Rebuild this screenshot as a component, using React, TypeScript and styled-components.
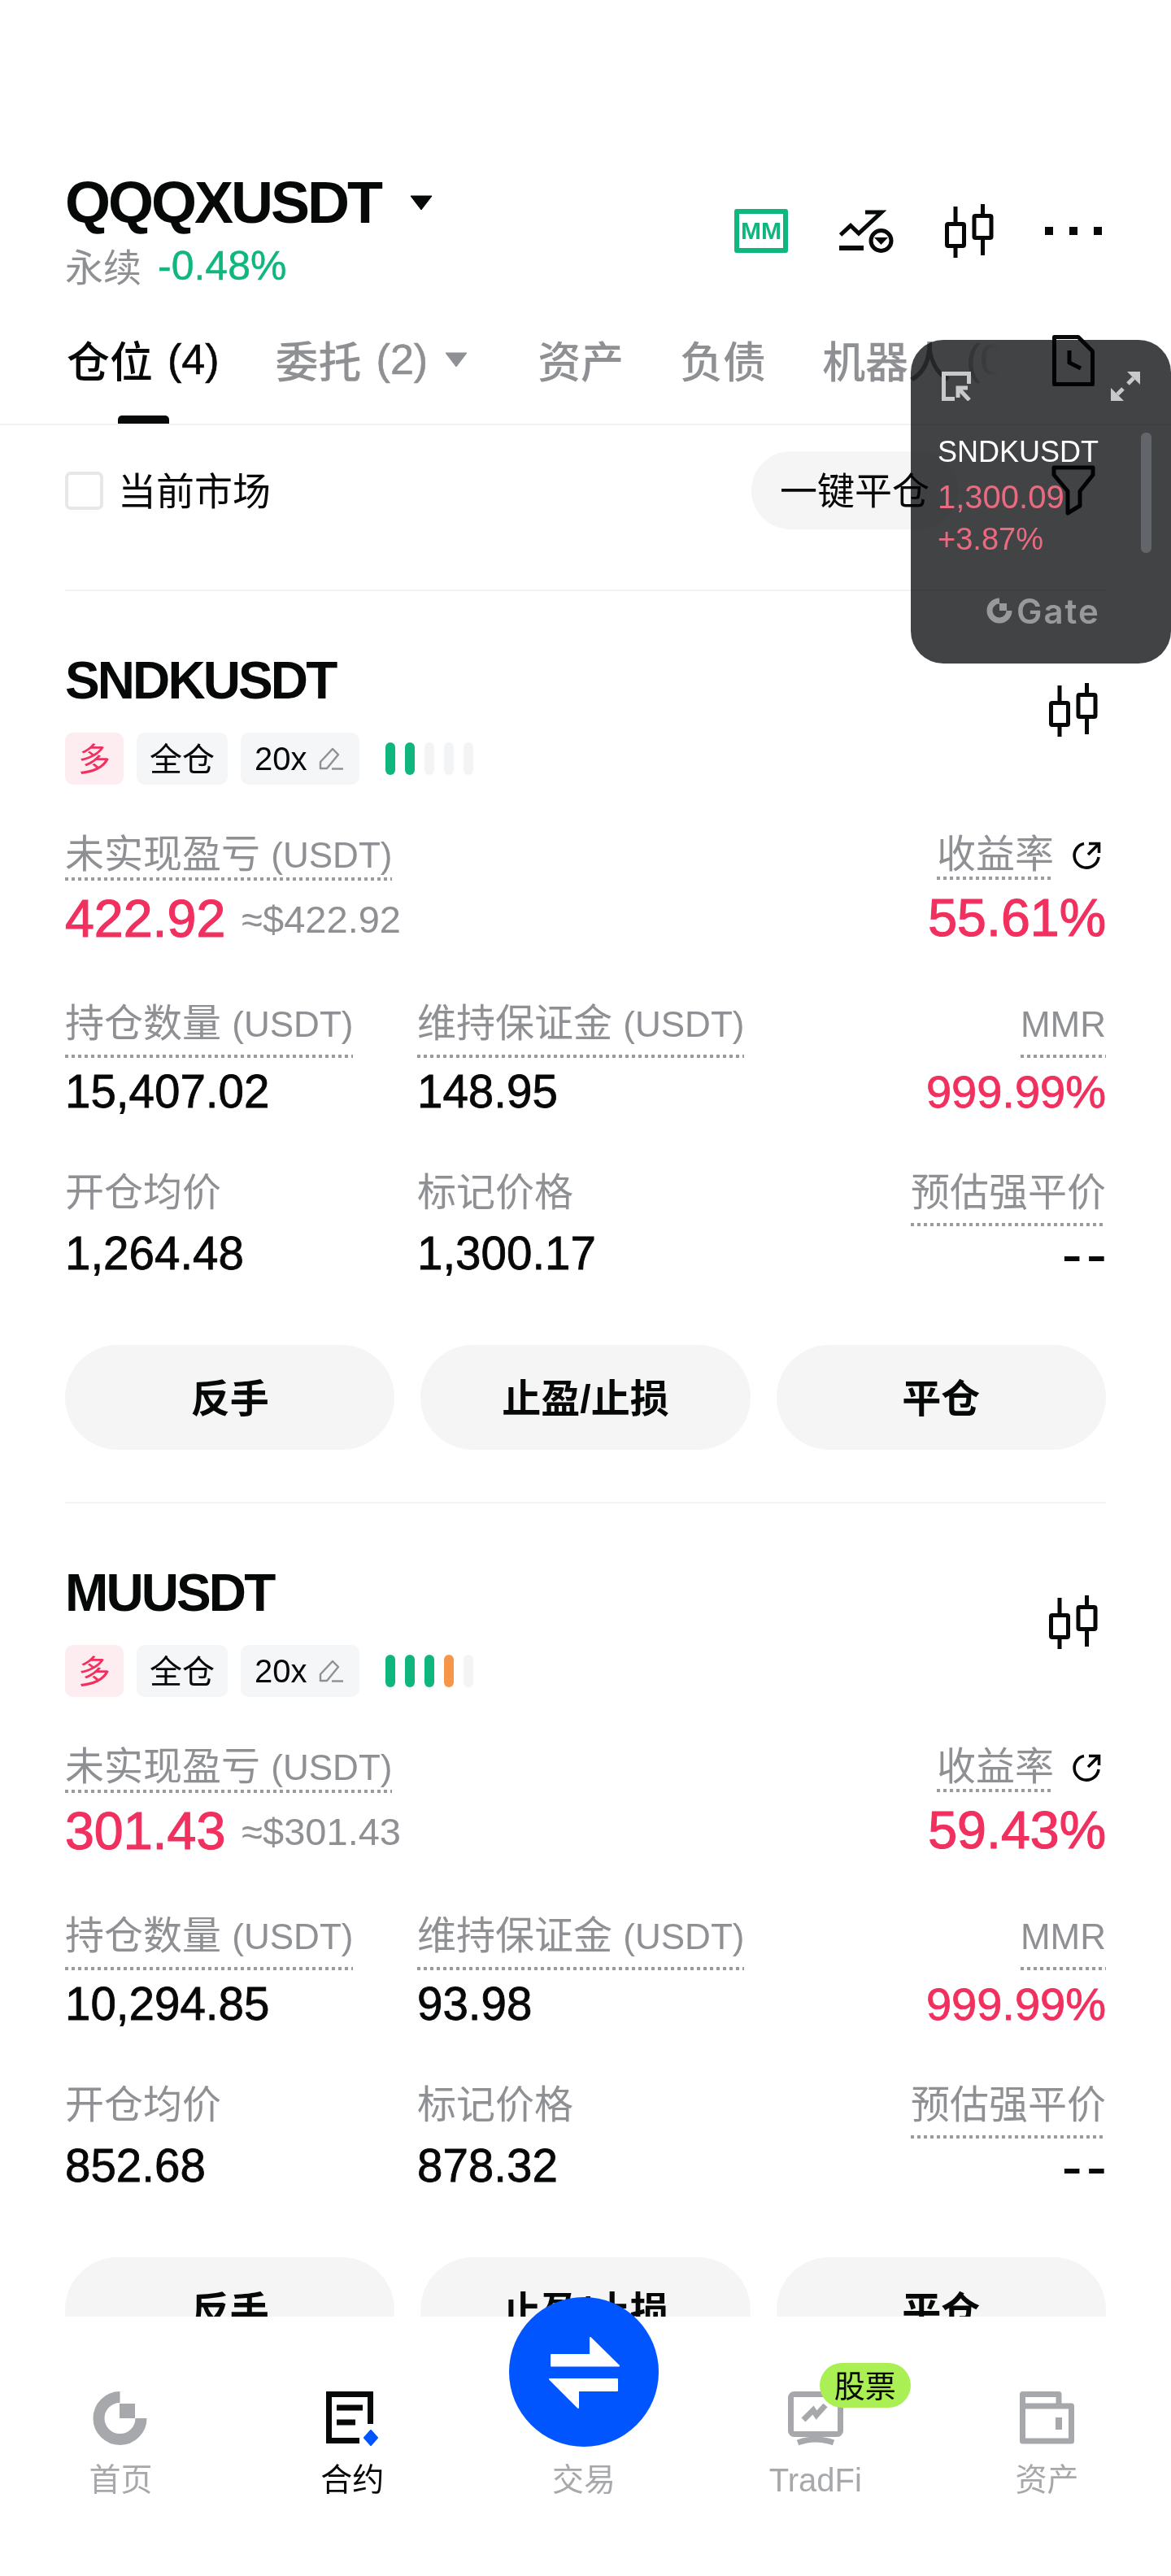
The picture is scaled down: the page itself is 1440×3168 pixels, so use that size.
import React from 'react';
import styled, { createGlobalStyle } from 'styled-components';

const black = '#070808';
const grey = '#8e9093';
const red = '#f0305f';
const green = '#0fb77e';
const navGrey = '#a6a8ab';
const blue = '#0055ff';

const GlobalStyle = createGlobalStyle`
  html, body {
    margin: 0;
    padding: 0;
    background: #fff;
  }
  body {
    font-family: 'Liberation Sans', 'Noto Sans CJK SC', sans-serif;
    color: ${black};
  }
`;

type Position = {
  symbol: string;
  lev: number[];
  pnl: string;
  roi: string;
  size: string;
  margin: string;
  entry: string;
  mark: string;
};

const positions: Position[] = [
  {
    symbol: 'SNDKUSDT',
    lev: [1, 1, 0, 0, 0],
    pnl: '422.92',
    roi: '55.61%',
    size: '15,407.02',
    margin: '148.95',
    entry: '1,264.48',
    mark: '1,300.17',
  },
  {
    symbol: 'MUUSDT',
    lev: [1, 1, 1, 2, 0],
    pnl: '301.43',
    roi: '59.43%',
    size: '10,294.85',
    margin: '93.98',
    entry: '852.68',
    mark: '878.32',
  },
];

const CandleIcon = () => (
  <svg width="60" height="66" viewBox="0 0 60 66" fill="none" stroke={black} strokeWidth="5">
    <rect x="2.5" y="24.5" width="21" height="27" rx="1.5" />
    <rect x="36" y="14.5" width="21" height="27" rx="1.5" />
    <path d="M13 3V24M13 52V66M46.5 0V14M46.5 42V63" />
  </svg>
);

const Caret = ({ color, w, h }: { color: string; w: number; h: number }) => (
  <svg width={w} height={h} viewBox="0 0 28 19">
    <path d="M1 1H27L14 18Z" fill={color} stroke={color} strokeLinejoin="round" />
  </svg>
);

const RefreshIcon = () => (
  <svg width="36" height="36" viewBox="0 0 36 36" fill="none" stroke={black} strokeWidth="3.6">
    <path d="M15 3.5A15 15 0 1 0 33 20" />
    <path d="M20 17L33 4M21 3.5H33.5V15" />
  </svg>
);

const EditIcon = () => (
  <svg width="30" height="30" viewBox="0 0 30 30" fill="none" stroke={grey} strokeWidth="2.4">
    <path d="M2 27V19L17 3L24 10L10 27Z" strokeLinejoin="round" />
    <path d="M16 27.5H30" />
  </svg>
);

const Page = styled.div`
  position: relative;
  width: 1440px;
  height: 3168px;
  overflow: hidden;
  background: #fff;
`;

const Header = styled.header`
  display: flex;
  justify-content: space-between;
  align-items: center;
  padding: 209px 80px 0;
`;

const TitleBlock = styled.div`
  display: flex;
  flex-direction: column;
  gap: 10px;
`;

const TitleRow = styled.div`
  display: flex;
  align-items: center;
  gap: 36px;
  height: 80px;
`;

const Title = styled.h1`
  margin: 0;
  font-size: 72px;
  line-height: 80px;
  font-weight: 700;
  letter-spacing: -3px;
`;

const SubRow = styled.div`
  display: flex;
  align-items: center;
  gap: 20px;
  height: 56px;
`;

const SubLabel = styled.span`
  font-size: 47px;
  color: ${grey};
  padding-bottom: 4px;
`;

const SubChange = styled.span`
  font-size: 50px;
  color: ${green};
  -webkit-text-stroke: 0.5px ${green};
`;

const HeaderActions = styled.div`
  display: flex;
  align-items: center;
  gap: 63px;
  margin-top: 4px;
`;

const MmBadge = styled.div`
  box-sizing: border-box;
  width: 66px;
  height: 54px;
  border: 6px solid ${green};
  border-radius: 3px;
  display: flex;
  align-items: center;
  justify-content: center;
  color: ${green};
  font-size: 30px;
  font-weight: 700;
  line-height: 1;
`;

const TabBar = styled.nav`
  display: flex;
  margin-top: 38px;
  padding: 0 94px 0 82px;
  border-bottom: 2px solid #f2f3f4;
`;

const TabList = styled.div`
  flex: 1;
  display: flex;
  gap: 69px;
  overflow: hidden;
  white-space: nowrap;
  margin-right: 49px;
  mask-image: linear-gradient(to right, #000 calc(100% - 85px), transparent calc(100% - 15px));
`;

const Tab = styled.div<{ $active?: boolean }>`
  position: relative;
  flex: none;
  display: flex;
  align-items: center;
  height: 98px;
  padding-bottom: 30px;
  font-size: 53px;
  font-weight: 500;
  color: ${(p) => (p.$active ? black : grey)};
`;

const TabCount = styled.span`
  margin-left: 18px;
  font-size: 52px;
  -webkit-text-stroke: 0.6px currentColor;
`;

const TabCaret = styled.span`
  display: flex;
  margin: 0 17px 0 21px;
`;

const TabMarker = styled.span`
  position: absolute;
  left: 63px;
  bottom: -1px;
  width: 63px;
  height: 11px;
  border-radius: 5px 5px 0 0;
  background: ${black};
`;

const DocSlot = styled.div`
  flex: none;
  display: flex;
  align-items: center;
  height: 100px;
`;

const Toolbar = styled.div`
  display: flex;
  align-items: center;
  justify-content: space-between;
  padding: 32px 93px 74px 80px;
`;

const Check = styled.label`
  display: flex;
  align-items: center;
  gap: 18px;
  font-size: 47px;
`;

const CheckBox = styled.span`
  box-sizing: border-box;
  width: 47px;
  height: 47px;
  border: 4px solid #e6e7e9;
  border-radius: 7px;
`;

const CheckText = styled.span`
  padding-bottom: 6px;
`;

const ToolbarRight = styled.div`
  display: flex;
  align-items: center;
  gap: 115px;
`;

const PillButton = styled.button`
  height: 96px;
  padding: 0 35px 6px;
  border: 0;
  border-radius: 48px;
  background: #f5f5f5;
  font-family: inherit;
  font-size: 46px;
  color: ${black};
`;

const Card = styled.section`
  margin: 0 80px;
  padding: 77px 0 64px;
  border-top: 2px solid #f2f3f4;
`;

const CardHead = styled.div`
  display: flex;
  justify-content: space-between;
  align-items: center;
`;

const CardHeadRight = styled.div`
  display: flex;
  margin: 0 10px 24px 0;
`;

const Symbol = styled.h2`
  margin: 0 0 31px;
  font-size: 64px;
  line-height: 66px;
  font-weight: 700;
  letter-spacing: -2.9px;
`;

const TagRow = styled.div`
  display: flex;
  align-items: center;
  gap: 16px;
`;

const Tag = styled.span<{ $long?: boolean }>`
  box-sizing: border-box;
  display: flex;
  align-items: center;
  gap: 14px;
  height: 64px;
  padding: 0 16px 5px;
  border-radius: 10px;
  font-size: 40px;
  background: ${(p) => (p.$long ? '#fdecf0' : '#f5f6f7')};
  color: ${(p) => (p.$long ? red : black)};
`;

const Leverage = styled.span`
  display: flex;
  align-items: center;
  gap: 14px;
  margin: 5px 4px 0 1px;
`;

const LevBars = styled.div`
  display: flex;
  gap: 12px;
  margin-left: 16px;
`;

const LevBar = styled.span<{ $level: number }>`
  width: 12px;
  height: 40px;
  border-radius: 6px;
  background: ${(p) => (p.$level === 2 ? '#f7954a' : p.$level === 1 ? green : '#f2f4f6')};
`;

const PnlRow = styled.div`
  display: flex;
  justify-content: space-between;
  margin-top: 58px;
`;

const Stack = styled.div<{ $end?: boolean }>`
  display: flex;
  flex-direction: column;
  align-items: ${(p) => (p.$end ? 'flex-end' : 'flex-start')};
`;

const LabelLine = styled.div`
  display: flex;
  align-items: flex-start;
  gap: 22px;
`;

const RefreshSlot = styled.span`
  display: flex;
  margin: 11px 6px 0 0;
`;

const Label = styled.span<{ $dotted?: boolean; $pad: number }>`
  display: inline-block;
  white-space: nowrap;
  font-size: 48px;
  line-height: 55px;
  color: ${grey};
  padding-bottom: ${(p) => p.$pad}px;
  background-image: ${(p) =>
    p.$dotted ? `repeating-linear-gradient(to right, #9a9b9e 0 4px, transparent 4px 8px)` : 'none'};
  background-size: 100% 4px;
  background-repeat: no-repeat;
  background-position: left bottom;
`;

const Unit = styled.span`
  font-size: 44px;
`;

const PnlValues = styled.div`
  display: flex;
  align-items: center;
  gap: 20px;
  height: 64px;
  margin-top: 15px;
`;

const BigValue = styled.span`
  font-size: 64.5px;
  line-height: 64px;
  color: ${red};
  -webkit-text-stroke: 1.2px ${red};
`;

const PnlUsd = styled.span`
  font-size: 47px;
  color: ${grey};
`;

const StatGrid = styled.div<{ $top: number; $valueGap: number }>`
  display: grid;
  grid-template-columns: 433px 1fr auto;
  margin-top: ${(p) => p.$top}px;

  & > div > strong {
    margin-top: ${(p) => p.$valueGap}px;
  }
`;

const StatValue = styled.strong<{ $tone?: 'red' }>`
  display: block;
  height: 60px;
  line-height: 60px;
  font-weight: 400;
  font-size: ${(p) => (p.$tone ? 56 : 56.5)}px;
  color: ${(p) => (p.$tone ? red : black)};
  -webkit-text-stroke: 0.8px ${(p) => (p.$tone ? red : black)};
`;

const Dashes = styled(StatValue)`
  font-size: 76px;
  letter-spacing: 5px;
  margin-right: -6px;
  -webkit-text-stroke: 0;
`;

const ActionRow = styled.div`
  display: grid;
  grid-template-columns: repeat(3, 1fr);
  gap: 32px;
  margin-top: 82px;
`;

const ActionButton = styled.button`
  height: 129px;
  padding: 0 0 6px;
  border: 0;
  border-radius: 65px;
  background: #f5f5f5;
  font-family: inherit;
  font-size: 48px;
  font-weight: 700;
  color: ${black};
`;

/* floating price window, darkens what lies under it */
const Pip = styled.aside`
  position: absolute;
  top: 418px;
  left: 1120px;
  box-sizing: border-box;
  width: 320px;
  height: 398px;
  padding: 39px 0 0 33px;
  border-radius: 40px;

  &::before {
    content: '';
    position: absolute;
    inset: 0;
    border-radius: inherit;
    background: #424345;
    mix-blend-mode: multiply;
  }
`;

const PipInner = styled.div`
  position: relative;
`;

const PipIcons = styled.div`
  display: flex;
  justify-content: space-between;
  margin: 0 38px 38px 5px;
`;

const PipName = styled.div`
  font-size: 36px;
  line-height: 50px;
  color: #fff;
`;

const PipPrice = styled.div`
  margin-top: 3px;
  font-size: 40px;
  line-height: 54px;
  color: #ec6a80;
`;

const PipChange = styled.div`
  font-size: 38px;
  line-height: 50px;
  color: #ec6a80;
`;

const PipScroll = styled.span`
  position: absolute;
  top: 75px;
  left: 250px;
  width: 13px;
  height: 148px;
  border-radius: 6px;
  background: #62666b;
`;

const PipBrand = styled.div`
  display: flex;
  align-items: center;
  gap: 5px;
  margin: 45px 0 0 60px;
  height: 36px;
  color: #98999b;
  font-family: Inter, 'Liberation Sans', sans-serif;
  font-size: 42px;
  font-weight: 600;
  letter-spacing: 2px;
`;

const BottomNav = styled.nav`
  position: absolute;
  left: 0;
  right: 0;
  bottom: 0;
  height: 319px;
  padding: 0 10px 0 6px;
  display: grid;
  grid-template-columns: repeat(5, 1fr);
  background: #fff;
`;

const NavItem = styled.div<{ $active?: boolean }>`
  position: relative;
  display: flex;
  flex-direction: column;
  align-items: center;
  padding-top: 91px;
  font-size: 38px;
  color: ${(p) => (p.$active ? black : navGrey)};
`;

const NavIcon = styled.div`
  display: flex;
  justify-content: center;
  width: 68px;
  height: 68px;
`;

const NavLabel = styled.span<{ $wide?: boolean }>`
  margin-top: 17px;
  line-height: 50px;
  font-size: ${(p) => (p.$wide ? 40 : 39)}px;
`;

const Fab = styled.div`
  position: absolute;
  top: -24px;
  left: 50%;
  width: 184px;
  height: 184px;
  margin-left: -92px;
  border-radius: 50%;
  background: ${blue};
`;

const NavBadge = styled.span`
  position: absolute;
  top: 57px;
  left: calc(50% + 5px);
  box-sizing: border-box;
  width: 112px;
  height: 55px;
  padding-bottom: 4px;
  border-radius: 28px;
  background: #aaf055;
  display: flex;
  align-items: center;
  justify-content: center;
  font-size: 38px;
  color: ${black};
`;

const PositionCard = ({ item }: { item: Position }) => (
  <Card>
    <CardHead>
      <div>
        <Symbol>{item.symbol}</Symbol>
        <TagRow>
          <Tag $long>多</Tag>
          <Tag>全仓</Tag>
          <Tag>
            <Leverage>
              20x
              <EditIcon />
            </Leverage>
          </Tag>
          <LevBars>
            {item.lev.map((level, i) => (
              <LevBar key={i} $level={level} />
            ))}
          </LevBars>
        </TagRow>
      </div>
      <CardHeadRight>
        <CandleIcon />
      </CardHeadRight>
    </CardHead>

    <PnlRow>
      <Stack>
        <Label $dotted $pad={4}>
          未实现盈亏 <Unit>(USDT)</Unit>
        </Label>
        <PnlValues>
          <BigValue>{item.pnl}</BigValue>
          <PnlUsd>≈${item.pnl}</PnlUsd>
        </PnlValues>
      </Stack>
      <Stack $end>
        <LabelLine>
          <Label $dotted $pad={4}>
            收益率
          </Label>
          <RefreshSlot>
            <RefreshIcon />
          </RefreshSlot>
        </LabelLine>
        <PnlValues>
          <BigValue>{item.roi}</BigValue>
        </PnlValues>
      </Stack>
    </PnlRow>

    <StatGrid $top={69} $valueGap={12}>
      <Stack>
        <Label $dotted $pad={14}>
          持仓数量 <Unit>(USDT)</Unit>
        </Label>
        <StatValue>{item.size}</StatValue>
      </Stack>
      <Stack>
        <Label $dotted $pad={14}>
          维持保证金 <Unit>(USDT)</Unit>
        </Label>
        <StatValue>{item.margin}</StatValue>
      </Stack>
      <Stack $end>
        <Label $dotted $pad={14}>
          <Unit>MMR</Unit>
        </Label>
        <StatValue $tone="red">999.99%</StatValue>
      </Stack>
    </StatGrid>

    <StatGrid $top={66} $valueGap={4}>
      <Stack>
        <Label $pad={14}>开仓均价</Label>
        <StatValue>{item.entry}</StatValue>
      </Stack>
      <Stack>
        <Label $pad={14}>标记价格</Label>
        <StatValue>{item.mark}</StatValue>
      </Stack>
      <Stack $end>
        <Label $dotted $pad={14}>
          预估强平价
        </Label>
        <Dashes>--</Dashes>
      </Stack>
    </StatGrid>

    <ActionRow>
      <ActionButton>反手</ActionButton>
      <ActionButton>止盈/止损</ActionButton>
      <ActionButton>平仓</ActionButton>
    </ActionRow>
  </Card>
);

export default function App() {
  return (
    <Page>
      <GlobalStyle />

      <Header>
        <TitleBlock>
          <TitleRow>
            <Title>QQQXUSDT</Title>
            <Caret color={black} w={28} h={19} />
          </TitleRow>
          <SubRow>
            <SubLabel>永续</SubLabel>
            <SubChange>-0.48%</SubChange>
          </SubRow>
        </TitleBlock>
        <HeaderActions>
          <MmBadge>MM</MmBadge>
          <svg width="67" height="54" viewBox="0 0 67 54" fill="none" stroke={black} strokeWidth="5">
            <path d="M1.5 32L14 20.5L24 30L52 4H32" />
            <path d="M0 48H30" strokeWidth="6" />
            <circle cx="51.5" cy="39" r="12.5" />
            <path d="M43 35H60L51.5 44Z" fill={black} stroke="none" />
          </svg>
          <CandleIcon />
          <svg width="75" height="10" viewBox="0 0 75 10" fill={black}>
            <rect x="0" width="10" height="10" />
            <rect x="30" width="10" height="10" />
            <rect x="60" width="10" height="10" />
          </svg>
        </HeaderActions>
      </Header>

      <TabBar>
        <TabList>
          <Tab $active>
            仓位<TabCount>(4)</TabCount>
            <TabMarker />
          </Tab>
          <Tab>
            委托<TabCount>(2)</TabCount>
            <TabCaret>
              <Caret color={grey} w={28} h={19} />
            </TabCaret>
          </Tab>
          <Tab>资产</Tab>
          <Tab>负债</Tab>
          <Tab>
            机器人<TabCount>(0)</TabCount>
          </Tab>
        </TabList>
        <DocSlot>
          <svg width="52" height="63" viewBox="0 0 52 63" fill="none" stroke={black} strokeWidth="5">
            <path d="M2.5 2.5H32L49.5 20V60.5H2.5Z" strokeLinejoin="round" />
            <path d="M21 19V34L35 41" />
          </svg>
        </DocSlot>
      </TabBar>

      <Toolbar>
        <Check>
          <CheckBox />
          <CheckText>当前市场</CheckText>
        </Check>
        <ToolbarRight>
          <PillButton>一键平仓</PillButton>
          <svg width="54" height="62" viewBox="0 0 54 62" fill="none" stroke={black} strokeWidth="5">
            <path d="M3 3H51V12L35 32V50L20 59V32L3 12Z" strokeLinejoin="round" />
          </svg>
        </ToolbarRight>
      </Toolbar>

      {positions.map((item) => (
        <PositionCard key={item.symbol} item={item} />
      ))}

      <Pip>
        <PipInner>
          <PipIcons>
            <svg width="36" height="36" viewBox="0 0 36 36" fill="none" stroke="#c8c9ca" strokeWidth="5">
              <path d="M33.5 15V2.5H2.5V33.5H16" />
              <path d="M20 32V20H32M20 20L34 35" />
            </svg>
            <svg width="36" height="36" viewBox="0 0 36 36" fill="#c8c9ca">
              <path d="M20 0H36V16Z" />
              <path d="M0 20V36H16Z" />
              <path d="M28 8L21 15M15 21L8 28" stroke="#c8c9ca" strokeWidth="5" />
            </svg>
          </PipIcons>
          <PipName>SNDKUSDT</PipName>
          <PipPrice>1,300.09</PipPrice>
          <PipChange>+3.87%</PipChange>
          <PipScroll />
          <PipBrand>
            <svg width="32" height="32" viewBox="0 0 32 32" fill="none" stroke="#98999b" strokeWidth="7">
              <path d="M16 4A12 12 0 1 0 28 16" />
              <rect x="16" y="7" width="9" height="9" fill="#98999b" stroke="none" />
            </svg>
            Gate
          </PipBrand>
        </PipInner>
      </Pip>

      <BottomNav>
        <NavItem>
          <NavIcon>
            <svg width="68" height="68" viewBox="0 0 68 68" fill="none" stroke={navGrey} strokeWidth="14">
              <path d="M33.5 8A26 26 0 1 0 59.5 34" />
              <rect x="33" y="16" width="19" height="18" fill={navGrey} stroke="none" />
            </svg>
          </NavIcon>
          <NavLabel>首页</NavLabel>
        </NavItem>
        <NavItem $active>
          <NavIcon>
            <svg width="68" height="68" viewBox="0 0 68 68" fill="none" stroke={black} strokeWidth="7">
              <path d="M56.5 41V4.5H5.5V61.5H43" />
              <path d="M15 21H47M15 39H38" />
              <path d="M57 49L65 58L57 67L49 58Z" fill={blue} stroke={blue} strokeWidth="2" strokeLinejoin="round" />
            </svg>
          </NavIcon>
          <NavLabel>合约</NavLabel>
        </NavItem>
        <NavItem>
          <Fab>
            <svg width="184" height="184" viewBox="0 0 184 184" fill="#fff" stroke="#fff" strokeWidth="2" strokeLinejoin="round">
              <path d="M52 71H100V50L135 84.5H52Z" />
              <path d="M133 101V115H85V136L50 101Z" />
            </svg>
          </Fab>
          <NavIcon />
          <NavLabel>交易</NavLabel>
        </NavItem>
        <NavItem>
          <NavIcon>
            <svg width="68" height="68" viewBox="0 0 68 68" fill="none" stroke={navGrey} strokeWidth="7">
              <rect x="3.5" y="4.5" width="61" height="49" rx="4" />
              <path d="M12 64Q34 56 56 64" />
              <path d="M19 36L31 24L35 30L46 18" strokeWidth="7" />
            </svg>
          </NavIcon>
          <NavLabel $wide>TradFi</NavLabel>
          <NavBadge>股票</NavBadge>
        </NavItem>
        <NavItem>
          <NavIcon>
            <svg width="68" height="68" viewBox="0 0 68 68" fill="none" stroke={navGrey} strokeWidth="7">
              <path d="M3.5 4.5H48V19H63.5V62H3.5ZM3.5 19H48" strokeLinejoin="round" />
              <path d="M48 33V48" strokeWidth="8" />
            </svg>
          </NavIcon>
          <NavLabel>资产</NavLabel>
        </NavItem>
      </BottomNav>
    </Page>
  );
}
